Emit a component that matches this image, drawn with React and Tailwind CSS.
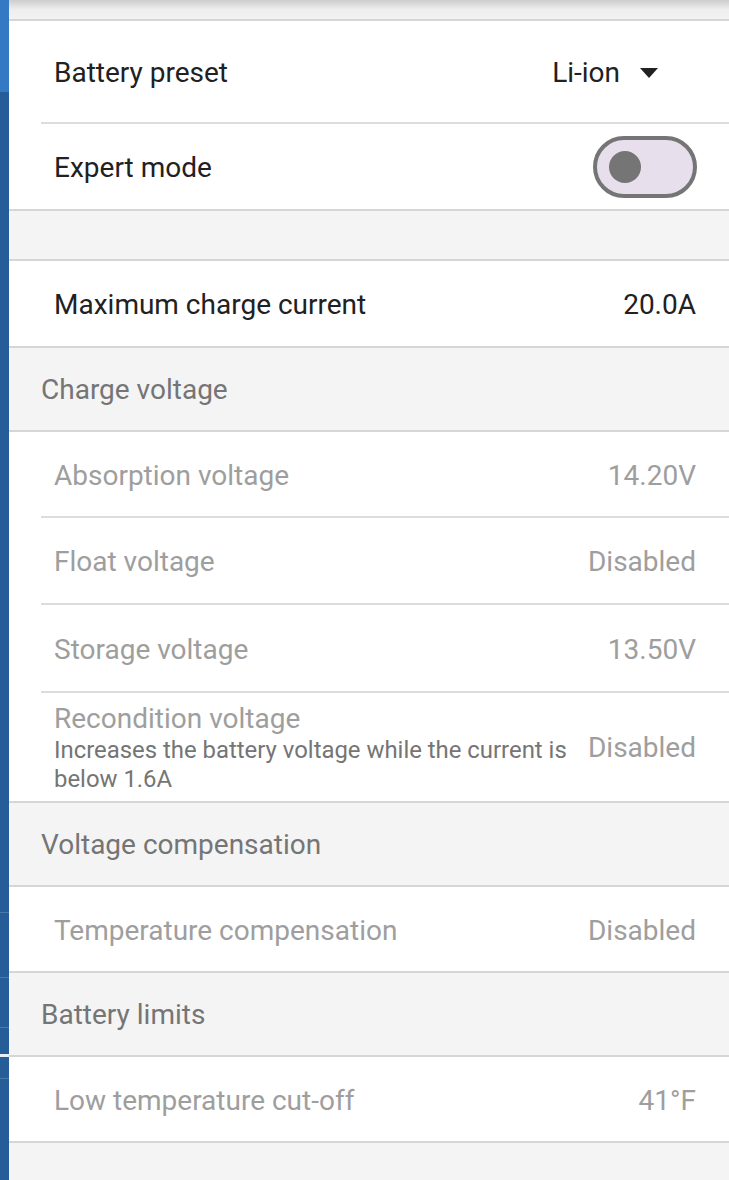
import React, { useState } from 'react';

const font = { fontFamily: 'Roboto, "Liberation Sans", sans-serif' };

const Row = ({ label, value, muted, inset, h = 'h-[86px]' }) => (
  <div className={`bg-white ${inset ? 'pl-[32px]' : ''}`}>
    <div
      className={`flex items-center justify-between pr-[33px] pt-[3px] border-b-2 ${h} ${
        inset ? 'border-[#dcdcdc] pl-[13px]' : 'border-[#d6d6d6] pl-[45px]'
      }`}
    >
      <span className={`text-[28px] ${muted ? 'text-[#9e9e9e]' : 'text-[#212121]'}`}>{label}</span>
      <span className={`text-[28px] ${muted ? 'text-[#9e9e9e]' : 'text-[#212121]'}`}>{value}</span>
    </div>
  </div>
);

const Header = ({ title }) => (
  <div className="h-[84px] flex items-center pl-[32px] pt-[1px] bg-[#f4f4f4] border-b-2 border-[#d6d6d6]">
    <span className="text-[28px] text-[#757575]">{title}</span>
  </div>
);

const Toggle = ({ on, onClick }) => (
  <button
    onClick={onClick}
    className={`w-[104px] h-[62px] rounded-full border-[4px] border-[#757575] bg-[#e7dfec] flex items-center px-[12px] ${
      on ? 'justify-end' : 'justify-start'
    }`}
  >
    <span className="w-[32px] h-[32px] rounded-full bg-[#757575]" />
  </button>
);

export default function App() {
  const [expert, setExpert] = useState(false);

  return (
    <div className="flex w-[729px] h-[1180px] overflow-hidden bg-[#f4f4f4]" style={font}>
      {/* sidebar edge behind the panel */}
      <div className="w-[9px] flex-shrink-0 flex flex-col bg-[#265d98]">
        <div className="h-[92px] bg-[#3479c4]" />
        <div className="h-[820px]" />
        <div className="h-[65px] border-t border-[#4a78aa]" />
        <div className="h-[50px] border-t border-[#4a78aa]" />
        <div className="h-[27px] border-t border-[#4a78aa]" />
        <div className="h-[3px] bg-[#e8eef5]" />
        <div className="h-[21px]" />
        <div className="flex-1 border-t border-[#4a78aa]" />
      </div>

      <div className="flex-1 flex flex-col">
        <div className="h-[21px] bg-gradient-to-b from-[#cdcdcd] via-[#eeeeee] to-[#f3f3f3] border-b-2 border-[#d6d6d6]" />

        <div className="bg-white pl-[32px]">
          <div className="h-[103px] flex items-center justify-between pl-[13px] pr-[33px] pt-[3px] border-b-2 border-[#dcdcdc]">
            <span className="text-[28px] text-[#212121]">Battery preset</span>
            <div className="flex items-center gap-[20px] pr-[38px]">
              <span className="text-[28px] text-[#212121]">Li-ion</span>
              <svg width="18" height="10" viewBox="0 0 18 10">
                <path d="M0 0 L18 0 L9 10 Z" fill="#212121" />
              </svg>
            </div>
          </div>
        </div>

        <div className="bg-white">
          <div className="h-[87px] flex items-center justify-between pl-[45px] pr-[32px] border-b-2 border-[#d6d6d6]">
            <span className="text-[28px] text-[#212121] pt-[3px]">Expert mode</span>
            <Toggle on={expert} onClick={() => setExpert(!expert)} />
          </div>
        </div>

        <div className="h-[50px] bg-[#f4f4f4] border-b-2 border-[#d6d6d6]" />

        <Row label="Maximum charge current" value="20.0A" h="h-[87px]" />

        <Header title="Charge voltage" />
        <Row label="Absorption voltage" value="14.20V" muted inset h="h-[86px]" />
        <Row label="Float voltage" value="Disabled" muted inset h="h-[87px]" />
        <Row label="Storage voltage" value="13.50V" muted inset h="h-[88px]" />
        <div className="bg-white">
          <div className="h-[110px] flex items-center justify-between pl-[45px] pr-[33px] pt-[2px] border-b-2 border-[#d6d6d6]">
            <div className="flex flex-col max-w-[525px]">
              <span className="text-[28px] leading-[34px] text-[#9e9e9e]">Recondition voltage</span>
              <span className="text-[23.9px] leading-[29px] text-[#757575]">
                Increases the battery voltage while the current is below 1.6A
              </span>
            </div>
            <span className="text-[28px] text-[#9e9e9e]">Disabled</span>
          </div>
        </div>

        <Header title="Voltage compensation" />
        <Row label="Temperature compensation" value="Disabled" muted />

        <Header title="Battery limits" />
        <Row label="Low temperature cut-off" value="41°F" muted />

        <div className="flex-1 bg-[#f4f4f4]" />
      </div>
    </div>
  );
}
